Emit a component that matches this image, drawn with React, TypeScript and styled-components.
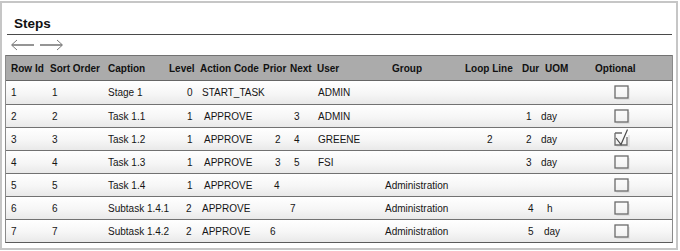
import styled, { createGlobalStyle } from "styled-components";

const GlobalStyle = createGlobalStyle`
  html, body {
    margin: 0;
    padding: 0;
    background: #ffffff;
  }
  body {
    font-family: "Liberation Sans", Arial, sans-serif;
    color: #151515;
  }
`;

const Frame = styled.div`
  box-sizing: border-box;
  width: 678px;
  height: 249px;
  margin-top: 1px;
  border: 2px solid #c6c6c6;
  padding: 0 3px 0 3px;
  background: #ffffff;
`;

const TitleBar = styled.div`
  box-sizing: border-box;
  height: 32px;
  margin: 0 1px 0 2px;
  padding: 0 0 3px 7px;
  border-bottom: 1px solid #4a4a4a;
  display: flex;
  align-items: flex-end;
`;

const Title = styled.h2`
  margin: 0;
  font-size: 13.5px;
  line-height: 15px;
  font-weight: bold;
  color: #111;
`;

const Nav = styled.div`
  height: 20px;
  display: flex;
  align-items: center;
  gap: 6px;
  padding-left: 5px;
`;

const NavButton = styled.button`
  border: none;
  background: none;
  padding: 0;
  width: 24px;
  height: 12px;
  display: flex;
  cursor: pointer;
`;

const Table = styled.div`
  width: 668px;
  box-sizing: border-box;
  border-left: 1px solid #8a8a8a;
  border-right: 1px solid #8a8a8a;
  border-bottom: 1px solid #5c5c5c;
`;

const gridCols = "41px 57px 61px 32px 63px 27px 27px 66px 80px 58px 22px 48px 84px";

const HeadRow = styled.div`
  display: grid;
  grid-template-columns: ${gridCols};
  height: 26px;
  box-sizing: border-box;
  background: #ababab;
  border-top: 1px solid #727272;
  border-bottom: 1px solid #666;
`;

const HeadCell = styled.div<{ $pad: number }>`
  display: flex;
  align-items: center;
  padding-left: ${(p) => p.$pad}px;
  font-size: 10px;
  font-weight: bold;
  color: #111;
  white-space: nowrap;
`;

const Row = styled.div`
  display: grid;
  grid-template-columns: ${gridCols};
  height: 23px;
  box-sizing: border-box;
  background: linear-gradient(#ffffff, #f6f6f6 55%, #e9e9e9);
  & + & {
    border-top: 1px solid #727272;
  }
`;

const Cell = styled.div<{ $pad: number }>`
  display: flex;
  align-items: center;
  padding-left: ${(p) => p.$pad}px;
  font-size: 10px;
  color: #151515;
  white-space: nowrap;
`;

const BoxWrap = styled.div`
  display: flex;
  align-items: center;
  padding-left: 26px;
`;

type Key =
  | "id"
  | "sort"
  | "caption"
  | "level"
  | "action"
  | "prior"
  | "next"
  | "user"
  | "group"
  | "loop"
  | "dur"
  | "uom";

const columns: { key: Key; title: string; head: number; pad: number }[] = [
  { key: "id", title: "Row Id", head: 5, pad: 5 },
  { key: "sort", title: "Sort Order", head: 3, pad: 5 },
  { key: "caption", title: "Caption", head: 4, pad: 4 },
  { key: "level", title: "Level", head: 4, pad: 22 },
  { key: "action", title: "Action Code", head: 3, pad: 7 },
  { key: "prior", title: "Prior", head: 3, pad: 15 },
  { key: "next", title: "Next", head: 3, pad: 7 },
  { key: "user", title: "User", head: 3, pad: 4 },
  { key: "group", title: "Group", head: 12, pad: 5 },
  { key: "loop", title: "Loop Line", head: 5, pad: 27 },
  { key: "dur", title: "Dur", head: 4, pad: 8 },
  { key: "uom", title: "UOM", head: 5, pad: 1 },
];

type Step = Partial<Record<Key, string>> & {
  optional: boolean;
  nudge?: Partial<Record<Key, number>>;
};

const steps: Step[] = [
  { id: "1", sort: "1", caption: "Stage 1", level: "0", action: "START_TASK", user: "ADMIN", optional: false, nudge: { action: 5 } },
  { id: "2", sort: "2", caption: "Task 1.1", level: "1", action: "APPROVE", next: "3", user: "ADMIN", dur: "1", uom: "day", optional: false },
  { id: "3", sort: "3", caption: "Task 1.2", level: "1", action: "APPROVE", prior: "2", next: "4", user: "GREENE", loop: "2", dur: "2", uom: "day", optional: true },
  { id: "4", sort: "4", caption: "Task 1.3", level: "1", action: "APPROVE", prior: "3", next: "5", user: "FSI", dur: "3", uom: "day", optional: false },
  { id: "5", sort: "5", caption: "Task 1.4", level: "1", action: "APPROVE", prior: "4", group: "Administration", optional: false, nudge: { prior: 14 } },
  { id: "6", sort: "6", caption: "Subtask 1.4.1", level: "2", action: "APPROVE", next: "7", group: "Administration", dur: "4", uom: "h", optional: false, nudge: { level: 21, action: 5, next: 3, dur: 10, uom: 7 } },
  { id: "7", sort: "7", caption: "Subtask 1.4.2", level: "2", action: "APPROVE", prior: "6", group: "Administration", dur: "5", uom: "day", optional: false, nudge: { level: 21, action: 5, prior: 10, dur: 10, uom: 4 } },
];

function Arrow({ dir }: { dir: "left" | "right" }) {
  const flip = dir === "left" ? "translate(24 0) scale(-1 1)" : undefined;
  return (
    <svg width="24" height="12" viewBox="0 0 24 12">
      <g transform={flip} stroke="#7a7a7a" fill="none">
        <line x1="0" y1="6" x2="22" y2="6" strokeWidth="1.6" />
        <polyline points="17,1 22.5,6 17,11" strokeWidth="1" />
      </g>
    </svg>
  );
}

function CheckBox({ checked }: { checked: boolean }) {
  return (
    <svg width="16" height="15" viewBox="0 0 16 15" style={{ overflow: "visible" }}>
      <path d="M2.5 14.2 H15 V3" stroke="#dedede" strokeWidth="1.4" fill="none" />
      {checked ? (
        <>
          <path d="M1 1 H8 M1 1 V13 H13 V5" stroke="#6a6a6a" strokeWidth="1.3" fill="none" />
          <path d="M2 6 L7 12.5 L13.5 -2.5" stroke="#4a4a4a" strokeWidth="1.2" fill="none" />
        </>
      ) : (
        <rect x="1" y="1" width="13" height="12" stroke="#6a6a6a" strokeWidth="1.3" fill="none" />
      )}
    </svg>
  );
}

export default function App() {
  return (
    <>
      <GlobalStyle />
      <Frame>
        <TitleBar>
          <Title>Steps</Title>
        </TitleBar>
        <Nav>
          <NavButton aria-label="Previous">
            <Arrow dir="left" />
          </NavButton>
          <NavButton aria-label="Next">
            <Arrow dir="right" />
          </NavButton>
        </Nav>
        <Table>
          <HeadRow>
            {columns.map((c) => (
              <HeadCell key={c.key} $pad={c.head}>
                {c.title}
              </HeadCell>
            ))}
            <HeadCell $pad={7}>Optional</HeadCell>
          </HeadRow>
          {steps.map((s) => (
            <Row key={s.id}>
              {columns.map((c) => (
                <Cell key={c.key} $pad={s.nudge?.[c.key] ?? c.pad}>
                  {s[c.key] ?? ""}
                </Cell>
              ))}
              <BoxWrap>
                <CheckBox checked={s.optional} />
              </BoxWrap>
            </Row>
          ))}
        </Table>
      </Frame>
    </>
  );
}
